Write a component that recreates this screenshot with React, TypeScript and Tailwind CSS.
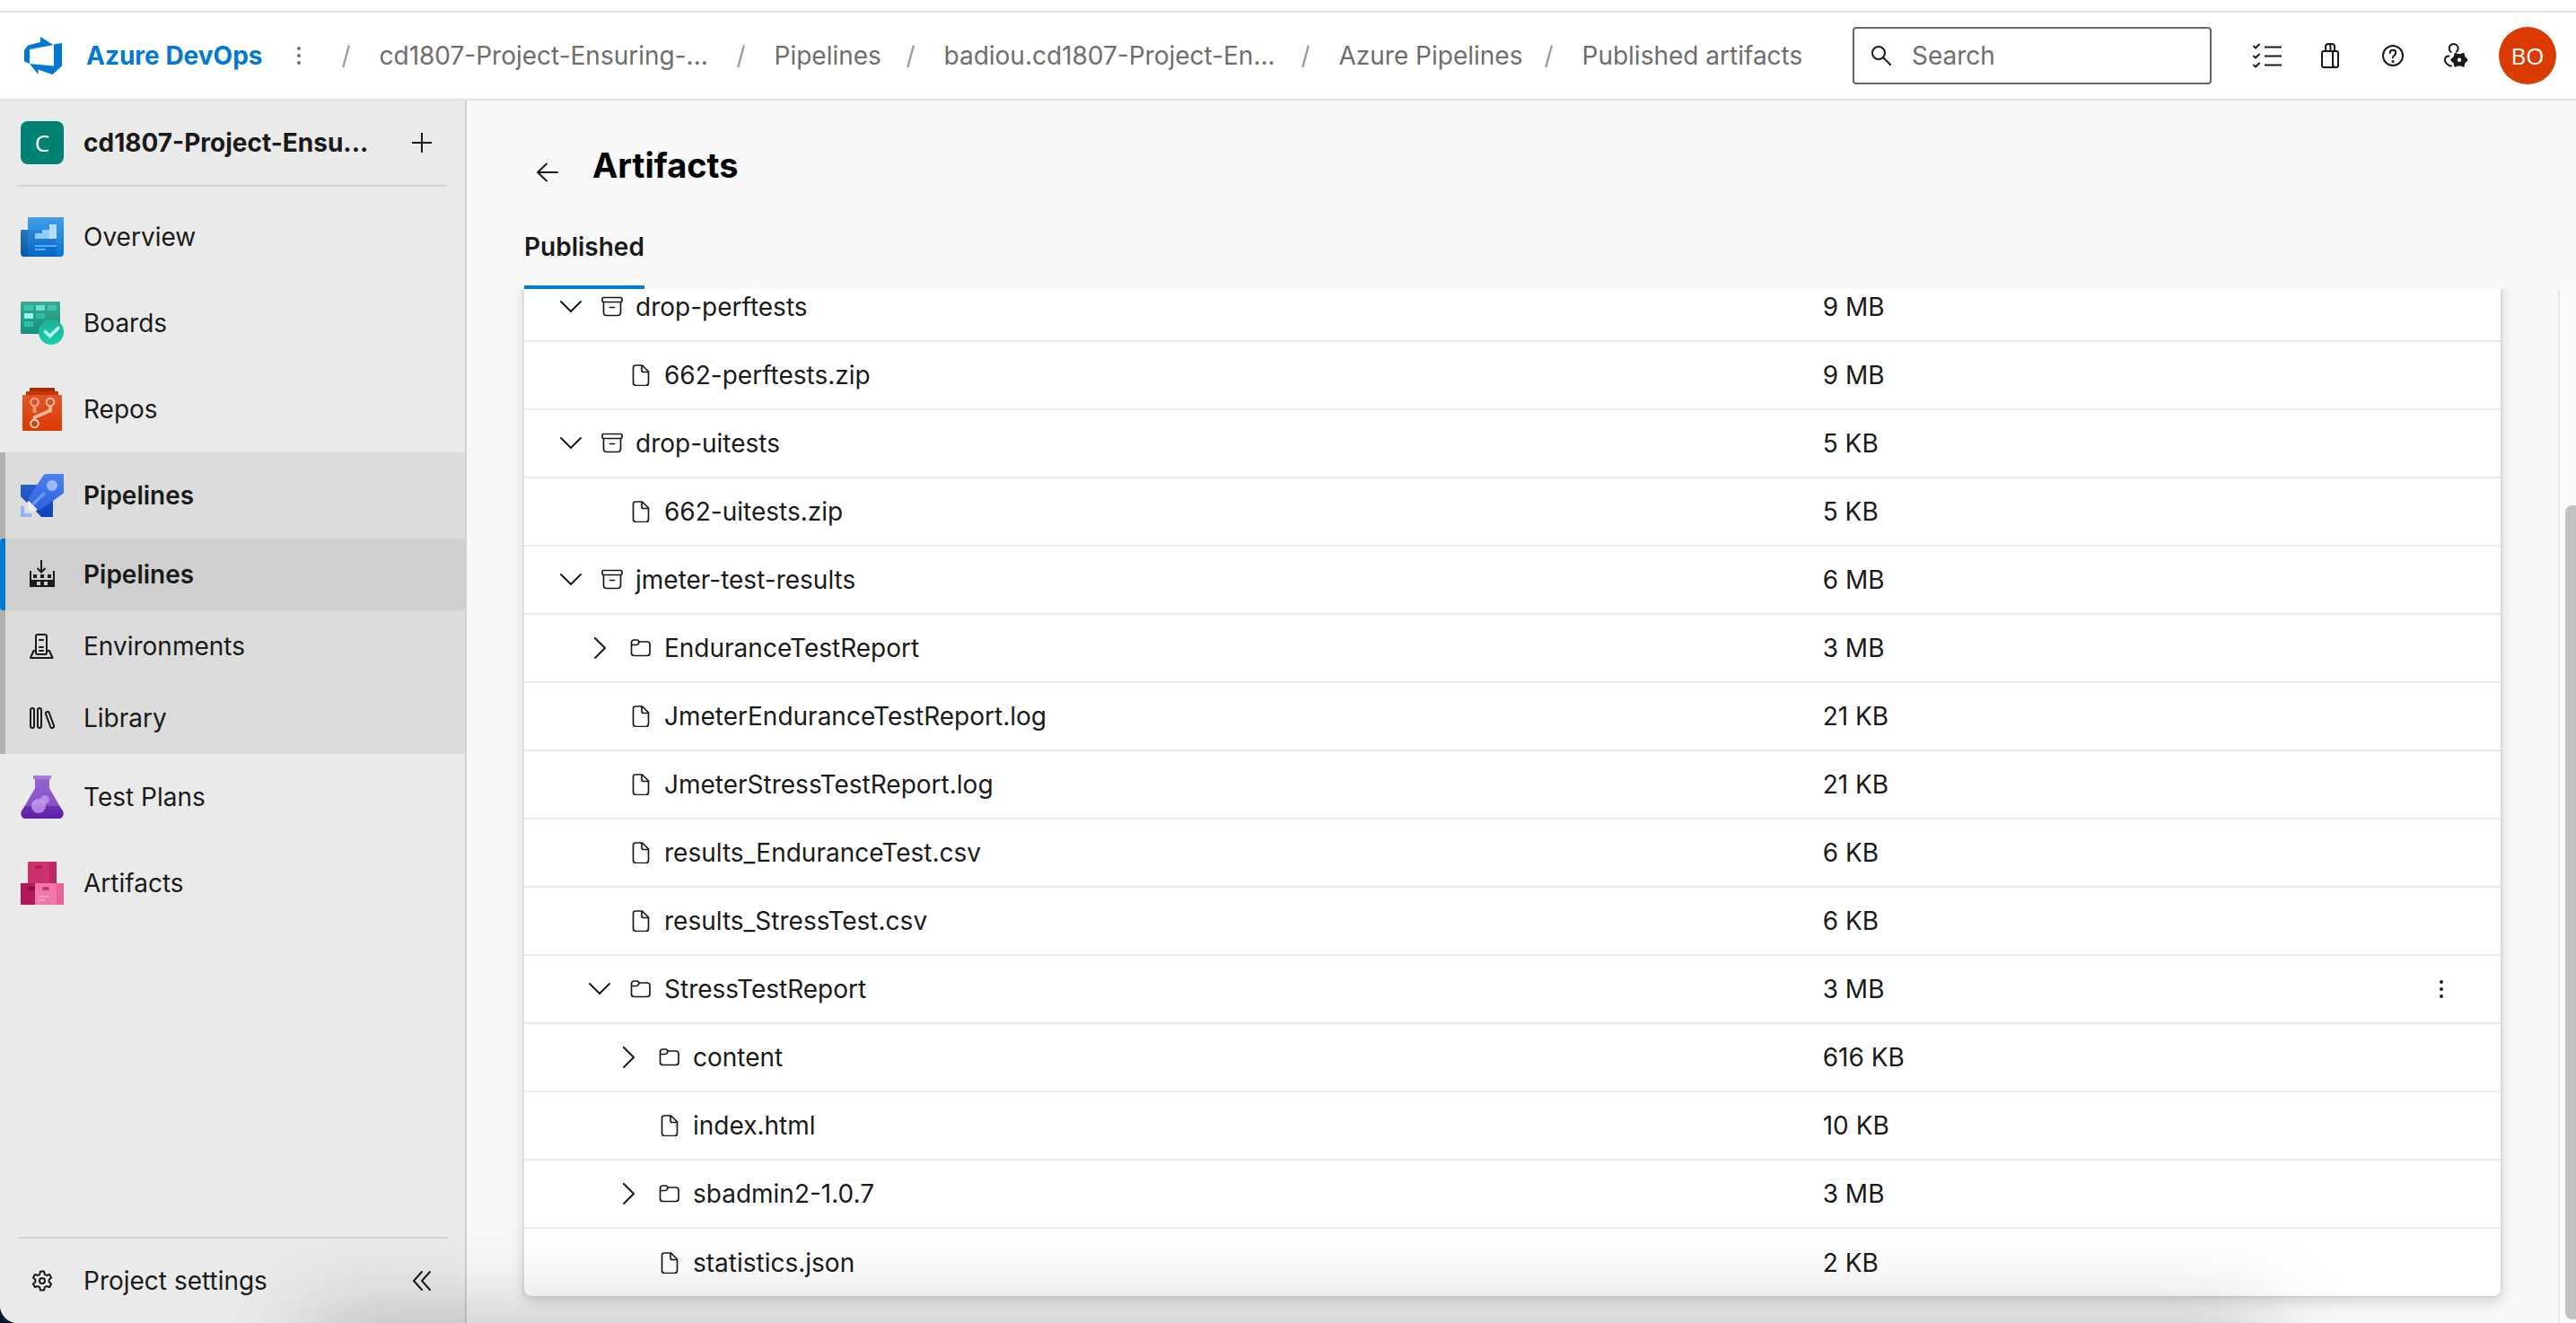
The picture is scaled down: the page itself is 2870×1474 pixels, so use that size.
import React, { useState } from "react";

type IconProps = { className?: string };

const stroke = {
  fill: "none",
  stroke: "currentColor",
  strokeWidth: 2,
  strokeLinecap: "round" as const,
  strokeLinejoin: "round" as const,
};

/* ---------- product icons ---------- */

function DevOpsLogo({ className }: IconProps) {
  return (
    <svg viewBox="0 0 48 48" className={className} fill="#0078d4" aria-hidden="true">
      <path d="M21 3l14 8.700L36 12 9 17v16L3 30.500V18l4-5.500L21 9z" />
      <path d="M36 11.500l9-1.500v25.500L34.500 45 18.500 39.500V45L9 33l27 2.500z" />
    </svg>
  );
}

function OverviewIcon({ className }: IconProps) {
  return (
    <svg viewBox="0 0 48 48" className={className} aria-hidden="true">
      <defs>
        <linearGradient id="ov-front" x1="0" y1="0" x2="0" y2="1">
          <stop offset="0" stopColor="#439de4" />
          <stop offset="1" stopColor="#0078d4" />
        </linearGradient>
        <linearGradient id="ov-mid" x1="0" y1="0" x2="0" y2="1">
          <stop offset="0" stopColor="#2c86d8" />
          <stop offset="1" stopColor="#0067c5" />
        </linearGradient>
        <linearGradient id="ov-back" x1="0" y1="0" x2="0" y2="1">
          <stop offset="0" stopColor="#2b76b5" />
          <stop offset="1" stopColor="#005ba1" />
        </linearGradient>
      </defs>
      <path d="M9 2h38a1 1 0 0 1 1 1v39a4 4 0 0 1-4 4H4V42h4V3a1 1 0 0 1 1-1z" fill="url(#ov-front)" />
      <path d="M8 16h32v26a4 4 0 0 0 4 4H4l4-4z" fill="url(#ov-mid)" />
      <path d="M1 16h7v26a4 4 0 0 1-8 0V17a1 1 0 0 1 1-1z" fill="url(#ov-back)" />
      <path d="M16 20h8v-4h8v10H16z" fill="#8fcbff" />
      <path d="M32 10h8v16h-8z" fill="#b5dcfb" />
      <path d="M16 33h24v2H16zM16 37h12v2H16z" fill="#58abf0" />
    </svg>
  );
}

function BoardsIcon({ className }: IconProps) {
  return (
    <svg viewBox="0 0 48 48" className={className} aria-hidden="true">
      <defs>
        <linearGradient id="bd-bg" x1="0" y1="0" x2="0" y2="1">
          <stop offset="0" stopColor="#3ea793" />
          <stop offset="1" stopColor="#16907b" />
        </linearGradient>
        <linearGradient id="bd-ok" x1="0" y1="0" x2="0" y2="1">
          <stop offset="0" stopColor="#1fae97" />
          <stop offset="1" stopColor="#16d0b0" />
        </linearGradient>
      </defs>
      <rect width="44" height="36" rx="1" fill="url(#bd-bg)" />
      <path d="M4 4h10v6H4zM30 4h10v6H30z" fill="#37c8ae" />
      <path d="M17 4h10v6H17z" fill="#62e4cd" />
      <path d="M4 13h10v6H4z" fill="#8dffe9" />
      <path d="M17 13h10v6H17zM4 22h10v6H4z" fill="#2cbfa5" />
      <circle cx="34" cy="34" r="14" fill="url(#bd-ok)" />
      <path d="M26.500 32.500l6 6L43 28.500" fill="none" stroke="#c3fff3" strokeWidth="3.500" />
    </svg>
  );
}

function ReposIcon({ className }: IconProps) {
  return (
    <svg viewBox="0 0 48 48" className={className} aria-hidden="true">
      <defs>
        <linearGradient id="rp-bg" x1="0" y1="0" x2="0" y2="1">
          <stop offset="0" stopColor="#e2562b" />
          <stop offset="1" stopColor="#da3b01" />
        </linearGradient>
      </defs>
      <path d="M11 0h26a1 1 0 0 1 1 1v4H10V1a1 1 0 0 1 1-1z" fill="#a62d00" />
      <path d="M7 4h34a1 1 0 0 1 1 1v4H6V5a1 1 0 0 1 1-1z" fill="#c83600" />
      <rect x="2" y="8" width="44" height="40" rx="1" fill="url(#rp-bg)" />
      <path d="M15.500 20v8" fill="none" stroke="#f3936f" strokeWidth="4" />
      <path d="M33 20v5.500L15.500 33v3" fill="none" stroke="#fbb69c" strokeWidth="3.800" />
      <circle cx="15.500" cy="16" r="4.300" fill="none" stroke="#f7a387" strokeWidth="2" />
      <circle cx="33" cy="16" r="4.300" fill="none" stroke="#fbc0aa" strokeWidth="2" />
      <circle cx="15.500" cy="40" r="4.300" fill="none" stroke="#ffd6c8" strokeWidth="2" />
    </svg>
  );
}

function RocketIcon({ className }: IconProps) {
  return (
    <svg viewBox="0 0 48 48" className={className} aria-hidden="true">
      <defs>
        <linearGradient id="rk-back" x1="0" y1="0" x2="0" y2="1">
          <stop offset="0" stopColor="#2c60c9" />
          <stop offset="1" stopColor="#0b42b8" />
        </linearGradient>
        <linearGradient id="rk-body" x1="0" y1="0" x2="0" y2="1">
          <stop offset="0" stopColor="#4f80ea" />
          <stop offset="1" stopColor="#2b62e2" />
        </linearGradient>
      </defs>
      <path d="M1 12h20l15 12v23a1 1 0 0 1-1 1H23l-6-6.500 2-2L9 30l-2 2-7-7V13a1 1 0 0 1 1-1z" fill="url(#rk-back)" />
      <path d="M28 0h19a1 1 0 0 1 1 1v19q0 1.500-1.500 2.500L21 40.500 8 28 25 2q1-2 3-2z" fill="url(#rk-body)" />
      <circle cx="35" cy="13" r="6" fill="#9bb9f7" />
      <path d="M12 35.500L27 21" fill="none" stroke="#6b97f3" strokeWidth="3.500" />
      <path d="M9 30l9 9.500-1.500 2-5 0L8 38v-5z" fill="#e8eefc" />
      <path d="M0 36h4v8h8v4H0z" fill="#94b2f4" />
    </svg>
  );
}

function FlaskIcon({ className }: IconProps) {
  return (
    <svg viewBox="0 0 48 48" className={className} aria-hidden="true">
      <defs>
        <linearGradient id="fl-glass" x1="0" y1="0" x2="0" y2="1">
          <stop offset="0" stopColor="#9166cd" />
          <stop offset="1" stopColor="#8b50c9" />
        </linearGradient>
        <linearGradient id="fl-liquid" x1="0" y1="0" x2="0" y2="1">
          <stop offset="0" stopColor="#6c30b0" />
          <stop offset="1" stopColor="#5d1eab" />
        </linearGradient>
      </defs>
      <path d="M16 3h16v11l11.500 20h-39L16 14z" fill="url(#fl-glass)" />
      <path d="M4.500 34h39l3.500 5.500c2 4-.5 8.500-4.500 8.500h-37C1.500 48-1 43.500 1 39.500z" fill="url(#fl-liquid)" />
      <path d="M14 0h20v4H14z" fill="#a57bdc" />
      <circle cx="27" cy="27" r="5" fill="#bd92e8" opacity=".85" />
      <circle cx="20" cy="34" r="8" fill="#c9a3f2" opacity=".75" />
    </svg>
  );
}

function PackagesIcon({ className }: IconProps) {
  return (
    <svg viewBox="0 0 48 48" className={className} aria-hidden="true">
      <rect x="8" width="32" height="25" rx="1" fill="#cd3170" />
      <path d="M32 0h7a1 1 0 0 1 1 1v23h-8z" fill="#bd2864" />
      <rect x="16" y="4" width="8" height="4" rx="2" fill="#a91f57" />
      <path d="M0 24h16v24H1a1 1 0 0 1-1-1z" fill="#b01857" />
      <path d="M16 28h-6a2 2 0 0 0 0 4h6z" fill="#8a0f42" />
      <path d="M16 24h24v24H17a1 1 0 0 1-1-1z" fill="#f078a8" />
      <path d="M40 24h8v23a1 1 0 0 1-1 1h-7z" fill="#e8629a" />
      <rect x="24" y="28" width="8" height="4" rx="2" fill="#cd3170" />
      <path d="M20 38h12v2H20zM20 42h7v2h-7z" fill="#faa0c6" />
    </svg>
  );
}

/* ---------- sub navigation icons ---------- */

function BuildIcon({ className }: IconProps) {
  return (
    <svg viewBox="0 0 32 32" className={className} fill="currentColor" aria-hidden="true">
      <path d="M15 0v13M10.500 9l4.500 4.500L19.500 9" fill="none" stroke="currentColor" strokeWidth="2" />
      <path fillRule="evenodd" d="M2 12h2v10h24V12h2v18H2zM10 24v4h4v-4zM18 24v4h4v-4z" />
      <path d="M6 16h4v4H6zM14 16h4v4h-4zM22 16h4v4h-4z" />
    </svg>
  );
}

function ServerIcon({ className }: IconProps) {
  return (
    <svg viewBox="0 0 32 32" className={className} {...stroke} aria-hidden="true">
      <rect x="9" y="3" width="12" height="22" rx="2" />
      <path d="M13 9h4M13 17h4M13 21h4M9 21H6.500L3 29h24.500L24 21h-3" />
    </svg>
  );
}

function LibraryIcon({ className }: IconProps) {
  return (
    <svg viewBox="0 0 32 32" className={className} {...stroke} aria-hidden="true">
      <rect x="3" y="5" width="4" height="22" rx="2" />
      <rect x="11" y="5" width="4" height="22" rx="2" />
      <rect x="22.500" y="8.500" width="4" height="19" rx="2" transform="rotate(-20 24.500 18)" />
    </svg>
  );
}

function GearIcon({ className }: IconProps) {
  return (
    <svg viewBox="0 0 24 24" className={className} {...stroke} aria-hidden="true">
      <path d="M10 1.500h4l.8 3.300 2 1.200 3.300-1 2 3.500-2.500 2.300v2.400l2.500 2.300-2 3.500-3.300-1-2 1.200-.8 3.300h-4l-.8-3.300-2-1.200-3.300 1-2-3.500 2.500-2.300v-2.400L1.900 8.500l2-3.500 3.300 1 2-1.200z" />
      <circle cx="12" cy="12" r="3" />
    </svg>
  );
}

/* ---------- toolbar icons ---------- */

function MoreIcon({ className }: IconProps) {
  return (
    <svg viewBox="0 0 24 24" className={className} fill="currentColor" aria-hidden="true">
      <circle cx="12" cy="4" r="2" />
      <circle cx="12" cy="12" r="2" />
      <circle cx="12" cy="20" r="2" />
    </svg>
  );
}

function SearchIcon({ className }: IconProps) {
  return (
    <svg viewBox="0 0 24 24" className={className} {...stroke} aria-hidden="true">
      <circle cx="9" cy="9" r="7" />
      <path d="M14 14l8 8" />
    </svg>
  );
}

function ChecklistIcon({ className }: IconProps) {
  return (
    <svg viewBox="0 0 32 32" className={className} {...stroke} aria-hidden="true">
      <path d="M13 6.500h19M13 16.500h19M13 26.500h19" strokeLinecap="butt" />
      <path d="M1 5.500l2 2 4-4M1 16.500l2 2 4-4M1 26.500l2 2 4-4" />
    </svg>
  );
}

function BagIcon({ className }: IconProps) {
  return (
    <svg viewBox="0 0 32 32" className={className} {...stroke} aria-hidden="true">
      <rect x="7" y="11" width="18" height="18" rx="2" />
      <path d="M19 11v16l2 2M11 11V6q0-3 3-3h4q3 0 3 3v5M14.500 3q2 .5 2 3v5" />
    </svg>
  );
}

function HelpIcon({ className }: IconProps) {
  return (
    <svg viewBox="0 0 32 32" className={className} {...stroke} aria-hidden="true">
      <circle cx="16" cy="16" r="11" />
      <path d="M12.800 13q0-3.300 3.200-3.300t3.200 3.100q0 1.500-1.600 2.700T16 18.300" />
      <circle cx="16" cy="22.300" r=".6" />
    </svg>
  );
}

function UserGearIcon({ className }: IconProps) {
  return (
    <svg viewBox="0 0 32 32" className={className} {...stroke} aria-hidden="true">
      <path d="M10.700 12a5 5 0 1 1 6.300-.3" />
      <path d="M8.500 16.500Q4 16.500 4 20.500q0 4 4.500 6.300Q9.500 27.400 11 27.400" />
      <path
        fillRule="evenodd"
        fill="currentColor"
        stroke="none"
        d="M15.500 12.800l3 1.200h3l3-1.200 1.200 1 .5 3.200 3 2.800v2l-3 2.700-.5 3.500-1.200.8-3-1.200h-3l-3 1.200-1.200-.8-.5-3.500-3.300-2.700v-2l3.300-2.800.5-3.200zM20 18.500a2.200 2.200 0 1 0 0 4.400 2.200 2.200 0 0 0 0-4.400z"
      />
    </svg>
  );
}

function PlusIcon({ className }: IconProps) {
  return (
    <svg viewBox="0 0 24 24" className={className} {...stroke} strokeLinecap="butt" aria-hidden="true">
      <path d="M12 1v22M1 12h22" />
    </svg>
  );
}

function DoubleChevronIcon({ className }: IconProps) {
  return (
    <svg viewBox="0 0 24 24" className={className} {...stroke} aria-hidden="true">
      <path d="M12 2L3 12l9 10M21 2l-9 10 9 10" />
    </svg>
  );
}

function ArrowLeftIcon({ className }: IconProps) {
  return (
    <svg viewBox="0 0 24 24" className={className} {...stroke} aria-hidden="true">
      <path d="M23 12H1M11 2.500L1 12l10 9.500" />
    </svg>
  );
}

/* ---------- tree icons ---------- */

function ChevronIcon({ open }: { open: boolean }) {
  return (
    <svg viewBox="0 0 24 24" className="size-6" {...stroke} aria-hidden="true">
      <path d={open ? "M1 6l11 11L23 6" : "M7 1l11 11L7 23"} />
    </svg>
  );
}

function KindIcon({ kind }: { kind: Kind }) {
  return (
    <svg viewBox="0 0 24 24" className="size-6 shrink-0" {...stroke} strokeWidth={1.7} aria-hidden="true">
      {kind === "archive" && (
        <>
          <rect x="1" y="1.500" width="22" height="5" rx="1.500" />
          <path d="M2.500 6.500V18q0 3.500 3.500 3.500h12q3.500 0 3.500-3.500V6.500M9.500 12.500h5" />
        </>
      )}
      {kind === "file" && (
        <path d="M6 1H13.500L20.500 8V20.500Q20.500 23.500 17.500 23.500H6.500Q3.500 23.500 3.500 20.500V3.500Q3.500 1 6 1M13 1v5.500q0 2 2 2h5.500" />
      )}
      {kind === "folder" && (
        <path d="M1.500 6.500V17.500q0 3 3 3h14.500q3 0 3-3V8q0-3-3-3h-9L8.500 3h-4q-3 0-3 3v2.500H7q1 0 1.700-.8L10.500 5" />
      )}
    </svg>
  );
}

/* ---------- data ---------- */

type Kind = "archive" | "file" | "folder";
type Row = { name: string; size: string; kind: Kind; level: 0 | 1 | 2; open?: boolean; menu?: boolean };

const rows: Row[] = [
  { name: "drop-perftests", size: "9 MB", kind: "archive", level: 0, open: true },
  { name: "662-perftests.zip", size: "9 MB", kind: "file", level: 1 },
  { name: "drop-uitests", size: "5 KB", kind: "archive", level: 0, open: true },
  { name: "662-uitests.zip", size: "5 KB", kind: "file", level: 1 },
  { name: "jmeter-test-results", size: "6 MB", kind: "archive", level: 0, open: true },
  { name: "EnduranceTestReport", size: "3 MB", kind: "folder", level: 1, open: false },
  { name: "JmeterEnduranceTestReport.log", size: "21 KB", kind: "file", level: 1 },
  { name: "JmeterStressTestReport.log", size: "21 KB", kind: "file", level: 1 },
  { name: "results_EnduranceTest.csv", size: "6 KB", kind: "file", level: 1 },
  { name: "results_StressTest.csv", size: "6 KB", kind: "file", level: 1 },
  { name: "StressTestReport", size: "3 MB", kind: "folder", level: 1, open: true, menu: true },
  { name: "content", size: "616 KB", kind: "folder", level: 2, open: false },
  { name: "index.html", size: "10 KB", kind: "file", level: 2 },
  { name: "sbadmin2-1.0.7", size: "3 MB", kind: "folder", level: 2, open: false },
  { name: "statistics.json", size: "2 KB", kind: "file", level: 2 },
];

const indent = { 0: "pl-9", 1: "pl-[68px]", 2: "pl-[100px]" };

const crumbs = [
  { label: "cd1807-Project-Ensuring-...", width: "w-[366px]" },
  { label: "Pipelines", width: "w-[115px]" },
  { label: "badiou.cd1807-Project-En...", width: "w-[366px]" },
  { label: "Azure Pipelines", width: "w-[197px]" },
  { label: "Published artifacts", width: "" },
];

const tools = [
  { label: "My work items", Icon: ChecklistIcon },
  { label: "Marketplace", Icon: BagIcon },
  { label: "Help", Icon: HelpIcon },
  { label: "User settings", Icon: UserGearIcon },
];

/* ---------- page parts ---------- */

function TopBar() {
  const [query, setQuery] = useState("");
  return (
    <header className="flex h-[98px] shrink-0 items-center border-b-2 border-[#e2e2e2] bg-white pl-6 pr-[22px]">
      <a href="#" className="flex items-center gap-6 font-bold text-[#0078d4]">
        <DevOpsLogo className="size-12" />
        Azure DevOps
      </a>
      <button type="button" aria-label="More" className="ml-7 flex size-6 items-center justify-center text-[#6e6e6e]">
        <MoreIcon className="size-6" />
      </button>
      <nav aria-label="Breadcrumb" className="ml-9 flex items-center text-[#6e6e6e]">
        {crumbs.map((c) => (
          <React.Fragment key={c.label}>
            <span className="w-[42px] text-[#9a9a9a]">/</span>
            <a href="#" className={`${c.width} mr-8 whitespace-nowrap last:mr-0`}>
              {c.label}
            </a>
          </React.Fragment>
        ))}
      </nav>
      <label className="ml-auto flex h-16 w-[400px] items-center gap-[22px] rounded border-2 border-[#666666] pl-[18px]">
        <SearchIcon className="size-6 shrink-0 text-[#1a1a1a]" />
        <input
          type="search"
          aria-label="Search"
          placeholder="Search"
          value={query}
          onChange={(e) => setQuery(e.target.value)}
          className="min-w-0 flex-1 bg-transparent outline-none placeholder:text-[#6e6e6e]"
        />
      </label>
      <div className="ml-[46px] flex items-center gap-8">
        <div className="flex items-center gap-[38px]">
          {tools.map(({ label, Icon }) => (
            <button key={label} type="button" aria-label={label}>
              <Icon className="size-8" />
            </button>
          ))}
        </div>
        <button
          type="button"
          aria-label="Account BO"
          className="size-16 rounded-full bg-[#da3b01] font-['Open_Sans',sans-serif] text-[26px] text-white"
        >
          BO
        </button>
      </div>
    </header>
  );
}

function HubLink({ label, Icon, bold }: { label: string; Icon: React.FC<IconProps>; bold?: boolean }) {
  return (
    <a href="#" className={`flex h-24 items-center gap-[22px] pl-[23px] ${bold ? "font-semibold" : ""}`}>
      <Icon className="size-12" />
      {label}
    </a>
  );
}

function SubLink({ label, Icon, active }: { label: string; Icon: React.FC<IconProps>; active?: boolean }) {
  return (
    <a
      href="#"
      className={`flex h-20 items-center gap-[30px] ${
        active
          ? "-ml-1.5 rounded border-l-[6px] border-[#0078d4] bg-[#cfcfcf] pl-[25px] font-semibold"
          : "pl-[25px]"
      }`}
    >
      <Icon className="size-8" />
      {label}
    </a>
  );
}

function Sidebar() {
  return (
    <aside className="flex w-[520px] shrink-0 flex-col border-r-2 border-[#d0d0d0] bg-[#eaeaea]">
      <div className="ml-5 mr-5 flex h-24 items-center border-b-2 border-[#d3d3d3] pl-[3px]">
        <span className="flex size-12 items-center justify-center rounded-lg bg-[#008272] font-['Open_Sans',sans-serif] text-[26px] text-white">
          C
        </span>
        <span className="ml-[22px] flex-1 truncate font-bold">cd1807-Project-Ensu...</span>
        <button type="button" aria-label="Add" className="mr-4 flex items-center">
          <PlusIcon className="size-6" />
        </button>
      </div>
      <nav aria-label="Project" className="mt-2">
        <HubLink label="Overview" Icon={OverviewIcon} />
        <HubLink label="Boards" Icon={BoardsIcon} />
        <HubLink label="Repos" Icon={ReposIcon} />
        <div className="border-l-[6px] border-[#b0b0b0] bg-[#dcdcdc]">
          <div className="-ml-1.5">
            <HubLink label="Pipelines" Icon={RocketIcon} bold />
          </div>
          <SubLink label="Pipelines" Icon={BuildIcon} active />
          <SubLink label="Environments" Icon={ServerIcon} />
          <SubLink label="Library" Icon={LibraryIcon} />
        </div>
        <HubLink label="Test Plans" Icon={FlaskIcon} />
        <HubLink label="Artifacts" Icon={PackagesIcon} />
      </nav>
      <div className="mx-5 mt-auto flex h-24 items-center border-t-2 border-[#d3d3d3] pl-[15px]">
        <GearIcon className="size-6" />
        <a href="#" className="ml-[34px] flex-1">
          Project settings
        </a>
        <button type="button" aria-label="Collapse navigation" className="mr-4 flex items-center">
          <DoubleChevronIcon className="size-6" />
        </button>
      </div>
    </aside>
  );
}

function ArtifactTable() {
  return (
    <div className="shrink-0 overflow-hidden rounded-lg bg-white shadow-[0_6px_16px_rgba(0,0,0,0.16),0_0_4px_rgba(0,0,0,0.12)]">
      <table className="w-full table-fixed border-collapse text-left">
        <colgroup>
          <col className="w-[65.7%]" />
          <col />
          <col className="w-[132px]" />
        </colgroup>
        <tbody>
          {rows.map((row) => (
            <tr key={row.name} className="h-[76px] border-b-2 border-[#eaeaea] last:border-b-0">
              <td className="p-0">
                <div className={`flex items-center ${indent[row.level]}`}>
                  <span className="mr-[18px] flex w-8 justify-center">
                    {row.open !== undefined && (
                      <button
                        type="button"
                        aria-expanded={row.open}
                        aria-label={`Toggle ${row.name}`}
                        className="flex items-center"
                      >
                        <ChevronIcon open={row.open} />
                      </button>
                    )}
                  </span>
                  <KindIcon kind={row.kind} />
                  <span className="ml-3.5">{row.name}</span>
                </div>
              </td>
              <td className="p-0">{row.size}</td>
              <td className="p-0">
                {row.menu && (
                  <button type="button" aria-label="More actions" className="mx-auto flex items-center">
                    <MoreIcon className="size-6" />
                  </button>
                )}
              </td>
            </tr>
          ))}
        </tbody>
      </table>
    </div>
  );
}

export default function App() {
  return (
    <div className="h-screen w-full bg-[#04142b]">
      <div className="relative flex h-full w-full flex-col overflow-hidden rounded-bl-[20px] bg-white font-['Inter',sans-serif] text-[28px] leading-10 text-[#1a1a1a]">
        <div className="h-3.5 shrink-0 border-b-2 border-[#e2e2e2]" />
        <TopBar />
        <div className="flex min-h-0 flex-1">
          <Sidebar />
          <main className="flex min-w-0 flex-1 flex-col bg-[#f8f8f8]">
            <div className="mt-12 flex items-end gap-6 pl-16">
              <button type="button" aria-label="Back" className="flex h-8 w-[52px] items-center justify-center">
                <ArrowLeftIcon className="size-6" />
              </button>
              <h1 className="text-[38px] font-bold leading-[48px] text-black">Artifacts</h1>
            </div>
            <div role="tablist" className="mt-6 flex pl-16">
              <button
                type="button"
                role="tab"
                aria-selected="true"
                className="h-[90px] border-b-4 border-[#0078d4] font-semibold"
              >
                Published
              </button>
            </div>
            <div className="flex min-h-0 flex-1">
              <section
                aria-label="Published artifacts"
                className="flex min-w-0 flex-1 flex-col justify-end overflow-hidden px-16 pb-[30px]"
              >
                <ArtifactTable />
              </section>
              <div className="flex w-5 shrink-0 flex-col justify-end border-l-2 border-[#e8e8e8] bg-[#fafafa] pb-1 pl-1.5">
                <div className="h-[79%] rounded-l-lg bg-[#c1c1c1]" />
              </div>
            </div>
          </main>
        </div>
        <div className="pointer-events-none absolute left-[12%] right-[12%] top-full h-24 shadow-[0_0_100px_rgba(0,0,0,0.26)]" />
      </div>
    </div>
  );
}
